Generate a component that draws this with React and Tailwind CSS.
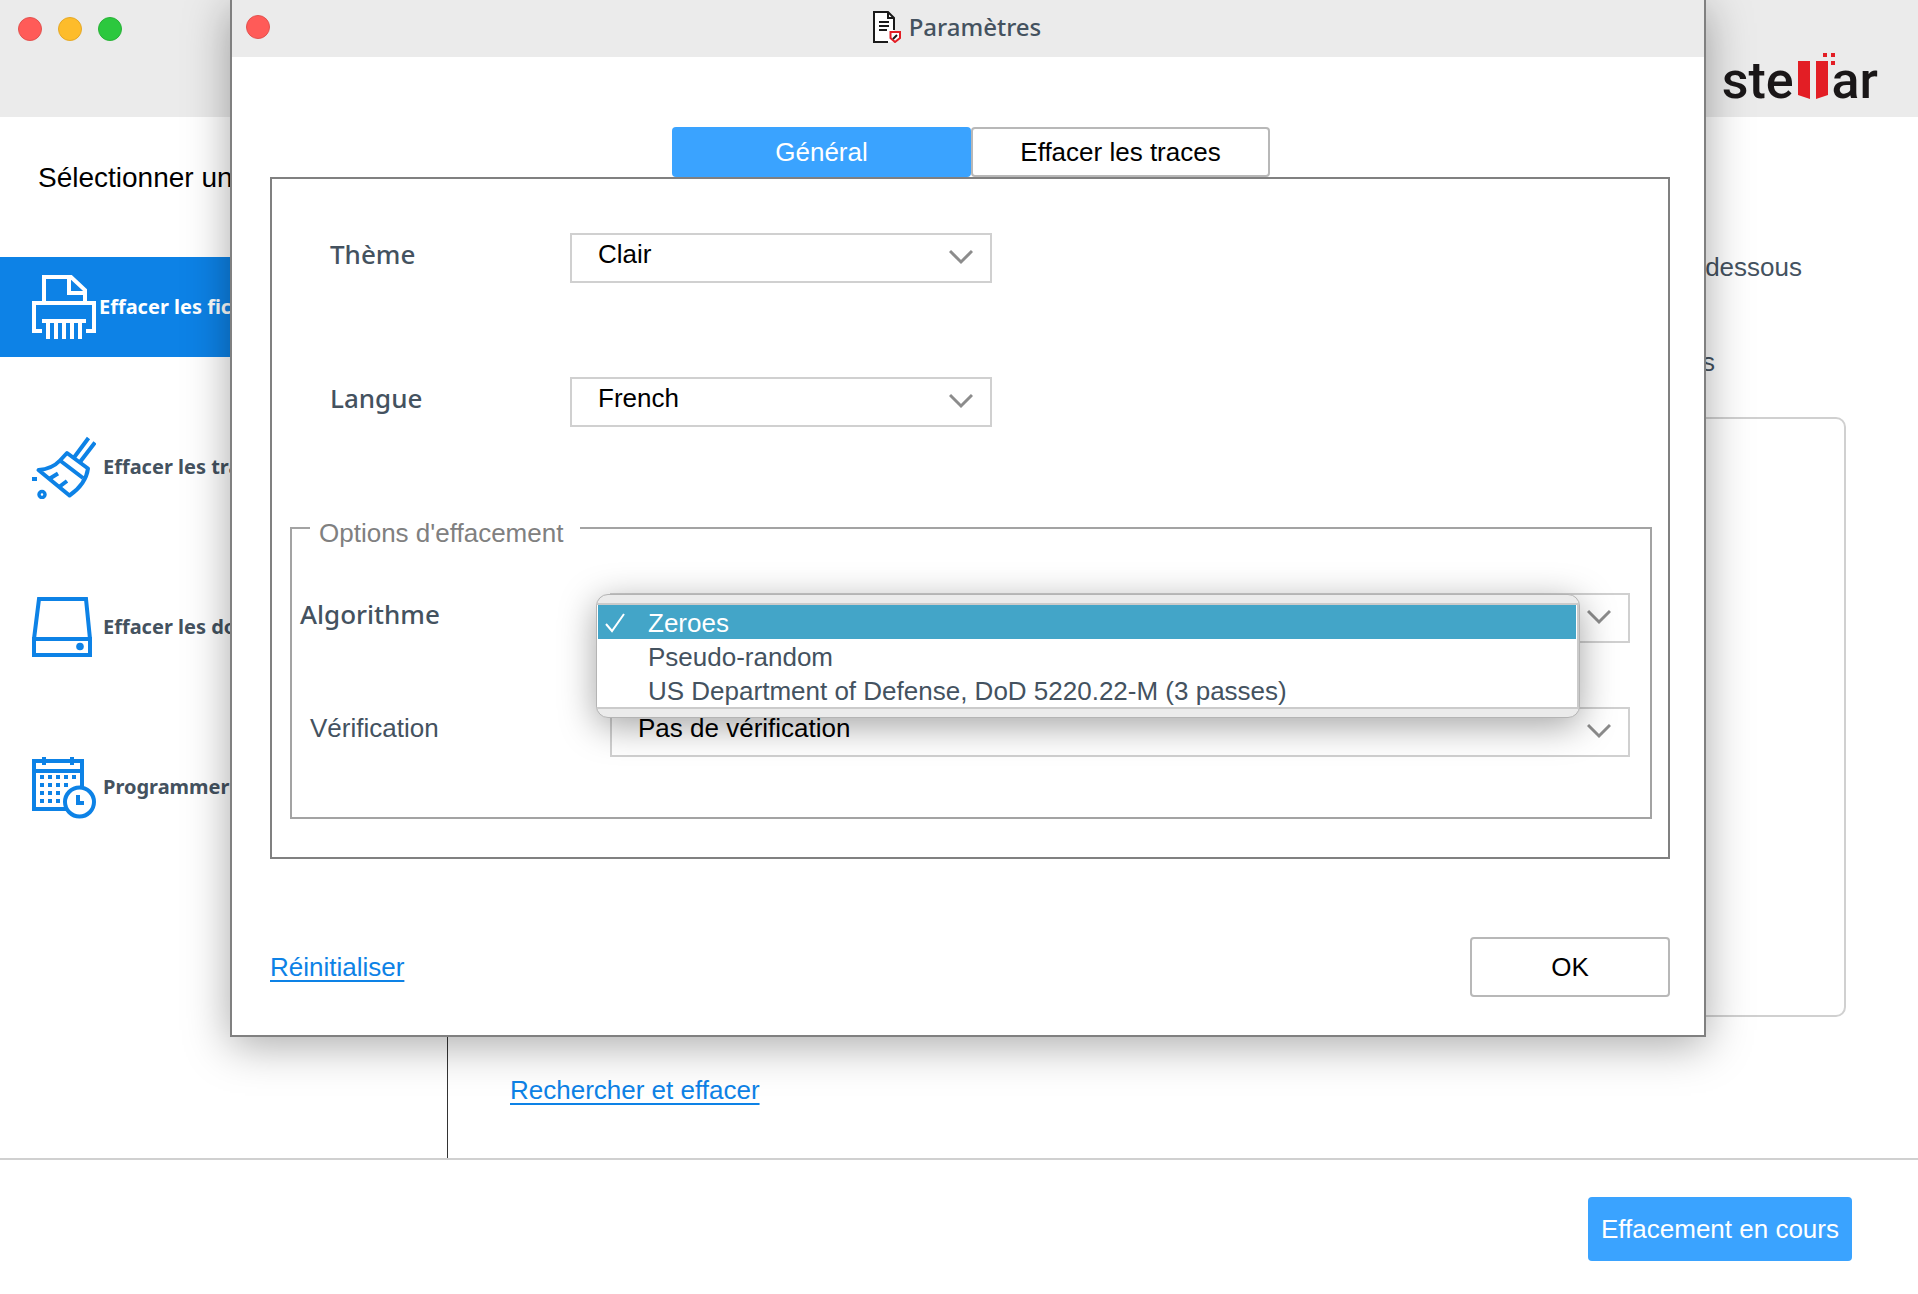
"use client"

import { useState } from "react"
import clsx from "clsx"

function ShredderIcon() {
  return (
    <svg className="size-16 shrink-0" viewBox="0 0 64 64" fill="none" stroke="currentColor" strokeWidth="4">
      <path d="M12 27V2h27l14 13v12M37 2v16h16" />
      <path d="M10 56H2V28h60v28h-8" />
      <path d="M10 46h44M16 46v18M24 46v18M32 46v18M40 46v18M48 46v18" />
    </svg>
  )
}

function BrushIcon() {
  return (
    <svg className="size-16 shrink-0" viewBox="0 0 64 64" fill="none" stroke="currentColor" strokeWidth="4">
      <path d="M56.500 3 42 22.500M63 7.500 48 27" />
      <path d="M35 18 56 33.500Q54 49 37.500 60.500L6.500 35Q20 34 28 25.500Z" strokeLinejoin="round" />
      <path d="m28 25.500 23 17.500M17 44l9-5.500M27 52l8-6" />
      <path d="M0 42h5v4H0z" fill="currentColor" stroke="none" />
      <circle cx="10" cy="59.500" r="3" strokeWidth="3.500" />
    </svg>
  )
}

function DriveIcon() {
  return (
    <svg className="size-16 shrink-0" viewBox="0 0 64 64" fill="none" stroke="currentColor" strokeWidth="4">
      <path d="M2 44 7 4h47l4 40" />
      <path d="M2 44h56v16H2z" />
      <circle cx="48" cy="51.500" r="3.800" fill="currentColor" stroke="none" />
    </svg>
  )
}

const CALENDAR_ROWS = [5, 4, 3, 3]

function ScheduleIcon() {
  return (
    <svg className="size-16 shrink-0" viewBox="0 0 64 64" fill="none" stroke="currentColor" strokeWidth="4">
      <path d="M2 6h48v48H2zM2 16h48M12 2v8M40 2v8" />
      {CALENDAR_ROWS.map((count, row) =>
        Array.from({ length: count }, (_, col) => (
          <rect
            key={`${row}-${col}`}
            x={8 + col * 8}
            y={20 + row * 8}
            width="4"
            height="4"
            fill="currentColor"
            stroke="none"
          />
        ))
      )}
      <circle cx="47.500" cy="47" r="14.500" fill="white" />
      <path d="M46 40v8h6" />
    </svg>
  )
}

function ReportIcon() {
  return (
    <svg className="h-8 w-7" viewBox="0 0 28 32" fill="none">
      <path d="M1 1h14l6 6v24H1z" fill="white" />
      <path d="M21 19V7l-6-6H1v30h14M15 1v6h6" stroke="#1a1a1a" strokeWidth="2" />
      <path d="M6 11h10M6 15h10M6 19h8" stroke="#1a1a1a" strokeWidth="2" />
      <path d="M17.500 21H27v6l-5 4-4.500-4z" fill="white" stroke="#e31e25" strokeWidth="2" />
      <path d="m20 28 4-4" stroke="#1a1a1a" strokeWidth="2" />
    </svg>
  )
}

function Logo() {
  return (
    <div className="flex items-baseline font-['Roboto',sans-serif] text-[52px] leading-[52px] font-medium text-[#1a1718]">
      <span>ste</span>
      <svg className="mx-1 h-[37px] w-[30px] overflow-visible" viewBox="0 0 30 37" fill="#e31e25">
        <path d="M0 0h12v38L0 34z" />
        <path d="M18 0h12v34l-12 4z" />
        <path d="M25-8h4v4h-4zM33-8h4v4h-4zM33 0h4v4h-4z" />
      </svg>
      <span>ar</span>
    </div>
  )
}

function Chevron() {
  return (
    <svg
      className="pointer-events-none col-start-1 row-start-1 mr-[17px] mb-[2px] h-4 w-6 self-center justify-self-end"
      viewBox="0 0 24 16"
      fill="none"
      stroke="#8c8c8c"
      strokeWidth="3"
    >
      <path d="m1 2 11 11L23 2" />
    </svg>
  )
}

function SelectBox({ id, value, onChange, options }) {
  return (
    <div className="grid h-[50px] border-2 border-[#d0d0d0] bg-white">
      <select
        id={id}
        value={value}
        onChange={(e) => onChange(e.target.value)}
        className="col-start-1 row-start-1 appearance-none bg-transparent pb-2 pl-[26px] text-black outline-none"
      >
        {options.map((option) => (
          <option key={option}>{option}</option>
        ))}
      </select>
      <Chevron />
    </div>
  )
}

function PopupList({ options, selected, onSelect }) {
  return (
    <div className="absolute top-px right-[50px] -left-[14px] rounded-xl border border-[#b4b4b4] bg-[#ebebeb] py-2 shadow-[0_8px_36px_rgba(0,0,0,0.36)]">
      <ul role="listbox" aria-label="Algorithme" className="border-y-2 border-r-2 border-[#cbcbcb] bg-white px-px">
        {options.map((option) => (
          <li
            key={option}
            role="option"
            aria-selected={option === selected}
            onClick={() => onSelect(option)}
            className={clsx(
              "flex h-[34px] items-center pt-px",
              option === selected ? "bg-[#43a5c8] text-white" : "text-[#44525f]"
            )}
          >
            <span className="w-[50px] pl-[7px]">
              {option === selected && (
                <svg className="size-5" viewBox="0 0 20 20" fill="none" stroke="currentColor" strokeWidth="2">
                  <path d="m1 11 6 7L19 1" />
                </svg>
              )}
            </span>
            <span className="whitespace-nowrap">{option}</span>
          </li>
        ))}
      </ul>
    </div>
  )
}

const NAV_ITEMS = [
  { label: "Effacer les fichiers", Icon: ShredderIcon },
  { label: "Effacer les traces", Icon: BrushIcon },
  { label: "Effacer les données", Icon: DriveIcon },
  { label: "Programmer", Icon: ScheduleIcon },
]

const ALGORITHMS = ["Zeroes", "Pseudo-random", "US Department of Defense, DoD 5220.22-M (3 passes)"]

function Sidebar() {
  return (
    <aside className="w-[448px] shrink-0 border-r border-[#333]">
      <h1 className="pt-[45px] pl-[38px] text-[28px] leading-8 text-black">Sélectionner une option</h1>
      <nav className="mt-[63px] flex flex-col gap-[60px] font-['Noto_Sans',sans-serif] text-xl font-bold">
        {NAV_ITEMS.map(({ label, Icon }, index) => (
          <button
            key={label}
            className={clsx(
              "flex h-[100px] items-center pl-8",
              index === 0 ? "gap-[3px] bg-[#0d82e6] text-white" : "gap-[7px] text-[#0d82e6]"
            )}
          >
            <Icon />
            <span className={index === 0 ? "text-white" : "text-[#44525f]"}>{label}</span>
          </button>
        ))}
      </nav>
    </aside>
  )
}

function SettingsDialog() {
  const [tab, setTab] = useState("general")
  const [theme, setTheme] = useState("Clair")
  const [language, setLanguage] = useState("French")
  const [algorithm, setAlgorithm] = useState("Zeroes")
  const [verification, setVerification] = useState("Pas de vérification")

  return (
    <div
      role="dialog"
      aria-labelledby="settings-title"
      className="absolute top-0 right-[212px] left-[230px] border-x-2 border-b-2 border-[#808080] bg-white shadow-[0_8px_42px_rgba(0,0,0,0.34)]"
    >
      <div className="flex h-[57px] items-center bg-[#ebebeb] pr-[60px] pb-[3px] pl-[14px]">
        <button aria-label="Fermer" className="size-6 rounded-full border border-[#e2524f] bg-[#ff5b58]" />
        <div className="flex flex-1 items-center justify-center gap-2">
          <ReportIcon />
          <h2 id="settings-title" className="font-['Noto_Sans',sans-serif] text-2xl font-medium">
            Paramètres
          </h2>
        </div>
      </div>

      <div className="pt-[70px] pr-[34px] pb-[38px] pl-[38px]">
        <div role="tablist" className="flex justify-center pl-[2px]">
          <button
            role="tab"
            aria-selected={tab === "general"}
            onClick={() => setTab("general")}
            className="h-[50px] w-[299px] rounded-sm bg-[#3aa3ff] text-white"
          >
            Général
          </button>
          <button
            role="tab"
            aria-selected={tab === "traces"}
            onClick={() => setTab("traces")}
            className="h-[50px] w-[299px] rounded-sm border-2 border-[#b8b8b8] bg-white text-black"
          >
            Effacer les traces
          </button>
        </div>

        <div role="tabpanel" className="border-2 border-[#808080] pt-[54px] pb-[38px]">
          <div className="flex items-center">
            <label htmlFor="theme" className="w-[298px] pb-2 pl-[58px] font-['Noto_Sans',sans-serif] font-medium">
              Thème
            </label>
            <div className="w-[422px]">
              <SelectBox id="theme" value={theme} onChange={setTheme} options={["Clair", "Sombre"]} />
            </div>
          </div>

          <div className="mt-[94px] flex items-center">
            <label htmlFor="language" className="w-[298px] pb-2 pl-[58px] font-['Noto_Sans',sans-serif] font-medium">
              Langue
            </label>
            <div className="w-[422px]">
              <SelectBox id="language" value={language} onChange={setLanguage} options={["French", "English"]} />
            </div>
          </div>

          <fieldset className="mt-[81px] mr-4 ml-[18px] border-2 border-[#a3a3a3] pt-[45px] pr-5 pb-[60px]">
            <legend className="ml-[18px] w-[270px] pt-[10px] pl-[9px] leading-[30px] text-[#808080]">
              Options d'effacement
            </legend>
            <div className="flex items-center">
              <label htmlFor="algorithm" className="w-[318px] pb-2 pl-2 font-['Noto_Sans',sans-serif] font-medium">
                Algorithme
              </label>
              <div className="relative z-10 flex-1">
                <SelectBox id="algorithm" value={algorithm} onChange={setAlgorithm} options={ALGORITHMS} />
                <PopupList options={ALGORITHMS} selected={algorithm} onSelect={setAlgorithm} />
              </div>
            </div>
            <div className="mt-16 flex items-center">
              <label htmlFor="verification" className="w-[318px] pb-2 pl-[18px]">
                Vérification
              </label>
              <div className="flex-1">
                <SelectBox
                  id="verification"
                  value={verification}
                  onChange={setVerification}
                  options={["Pas de vérification", "Vérification totale"]}
                />
              </div>
            </div>
          </fieldset>
        </div>

        <div className="mt-[78px] flex items-center justify-between">
          <a href="#reset" className="text-[#0d82e6] underline decoration-2 underline-offset-4">
            Réinitialiser
          </a>
          <button className="h-[60px] w-[200px] rounded-sm border-2 border-[#b8b8b8] bg-white text-black">OK</button>
        </div>
      </div>
    </div>
  )
}

export default function App() {
  return (
    <div className="relative flex min-h-screen flex-col bg-white font-['Liberation_Sans',Arial,sans-serif] text-[26px] leading-8 text-[#44525f]">
      <header className="flex h-[117px] items-end justify-between bg-[#ebebeb] pr-10 pb-[10px] pl-[18px]">
        <div className="flex gap-4 self-start pt-[17px]">
          <button aria-label="Fermer la fenêtre" className="size-6 rounded-full border border-[#e2524f] bg-[#ff5b58]" />
          <button aria-label="Réduire" className="size-6 rounded-full border border-[#e5a826] bg-[#fdbc2b]" />
          <button aria-label="Agrandir" className="size-6 rounded-full border border-[#28b237] bg-[#2cc83e]" />
        </div>
        <Logo />
      </header>

      <div className="flex flex-1">
        <Sidebar />
        <main className="flex-1 pt-[134px] pr-[72px] pb-[52px] pl-[62px]">
          <p className="pr-11 text-right">Ajouter des fichiers et des dossiers à la liste ci-dessous</p>
          <p className="mt-[63px] pr-[131px] text-right">Fichiers et dossiers ajoutés</p>
          <div className="mt-[39px] h-[600px] rounded-[10px] border-2 border-[#d0d0d0]" />
          <a
            href="#search"
            className="mt-[57px] inline-block text-[#0d82e6] underline decoration-2 underline-offset-4"
          >
            Rechercher et effacer
          </a>
        </main>
      </div>

      <footer className="flex justify-end border-t-2 border-[#d0d0d0] pt-[37px] pr-[66px] pb-[33px]">
        <button className="h-16 w-[264px] rounded-sm bg-[#3aa3ff] text-white">Effacement en cours</button>
      </footer>

      <SettingsDialog />
    </div>
  )
}
